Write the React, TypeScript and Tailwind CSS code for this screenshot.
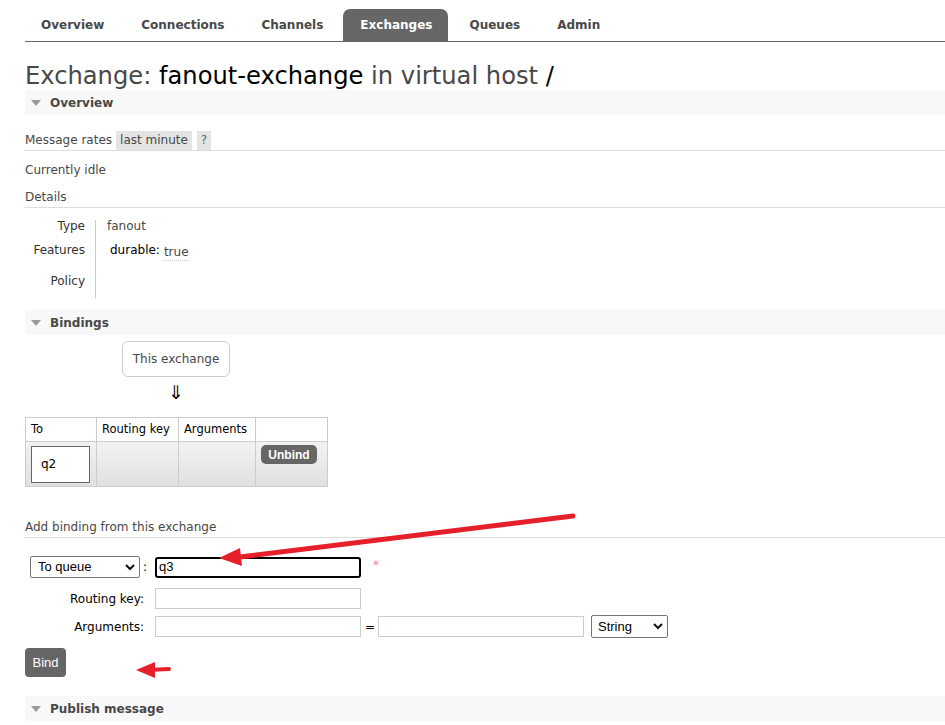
import React from "react";

const F = { fontFamily: '"DejaVu Sans", Verdana, sans-serif' };
const A = { fontFamily: '"Liberation Sans", Arial, sans-serif' };

function SectionHeader({ title, className = "" }: { title: string; className?: string }) {
  return (
    <div className={"flex h-[25px] items-center bg-[#f8f8f8] " + className}>
      <svg width="10" height="6" viewBox="0 0 10 6" className="ml-[6px] mr-[9px]">
        <polygon points="0,0 10,0 5,6" fill="#999" />
      </svg>
      <span className="text-[12px] font-bold text-[#484848]">{title}</span>
    </div>
  );
}

export default function App() {
  const tabs = ["Overview", "Connections", "Channels", "Exchanges", "Queues", "Admin"];
  return (
    <div className="relative min-h-[725px] w-[945px] overflow-hidden bg-white text-[12px] text-[#484848]" style={F}>
      <div className="pl-[25px]">
        {/* nav */}
        <div className="mt-[9px] flex h-[33px] border-b border-[#666]">
          {tabs.map((t, i) => (
            <div
              key={t}
              className={
                "flex h-[32px] items-center rounded-t-[7px] pl-[17px] pr-[16px] text-[12px] font-bold " +
                (i === 0 ? "ml-[-1px] mr-[4px] " : "mr-[4px] ") +
                (t === "Exchanges" ? "bg-[#666] text-white" : "text-[#484848]")
              }
            >
              {t}
            </div>
          ))}
        </div>

        {/* title */}
        <h1 className="mt-[22px] text-[24.2px] leading-[24px] font-normal text-[#484848]">
          Exchange: <span className="text-black">fanout-exchange</span> in virtual host <span className="text-black">/</span>
        </h1>

        <SectionHeader title="Overview" className="mt-[2px]" />

        <div className="mt-[16px] flex h-[20px] items-center border-b border-[#ddd] pb-[1px]">
          <span className="mr-[4px]">Message rates</span>
          <span className="flex h-[19px] items-center bg-[#e4e4e4] px-[4px] text-[#484848]">last minute</span>
          <span className="ml-[5px] flex h-[19px] items-center bg-[#e4e4e4] px-[4px] text-[#666]">?</span>
        </div>

        <div className="mt-[12px] leading-[14px]">Currently idle</div>

        <div className="mt-[13px] border-b border-[#ddd] pb-[3px] leading-[14px]">Details</div>

        <div className="mt-[12px] flex">
          <div className="w-[71px] border-r border-[#ccc] pr-[10px] text-right text-[#333]">
            <div className="h-[24px] leading-[13px]">Type</div>
            <div className="h-[31px] leading-[13px]">Features</div>
            <div className="h-[23px] leading-[13px]">Policy</div>
          </div>
          <div className="pl-[11px]">
            <div className="h-[24px] leading-[13px]">fanout</div>
            <div className="flex h-[31px] items-start pl-[3px] leading-[13px]">
              <span className="text-black">durable:</span>
              <span className="ml-[4px] mt-[2px] border-b border-dotted border-[#ccc] pb-[1px]">true</span>
            </div>
            <div className="h-[23px]"></div>
          </div>
        </div>

        <SectionHeader title="Bindings" className="mt-[12px]" />

        <div className="ml-[97px] mt-[6px] flex h-[36px] w-[108px] items-center justify-center rounded-[6px] border border-[#ccc]">
          This exchange
        </div>
        <div className="ml-[143px] mt-[4px] w-[14px] text-center text-[19px] leading-[22px] text-black">⇓</div>

        <table className="mt-[14px] table-fixed border-collapse text-[12px]" style={{ width: 302 }}>
          <colgroup>
            <col style={{ width: 71 }} />
            <col style={{ width: 82 }} />
            <col style={{ width: 77 }} />
            <col style={{ width: 72 }} />
          </colgroup>
          <thead>
            <tr className="h-[24px] bg-white">
              <th className="whitespace-nowrap border border-[#ccc] px-[5px] text-left text-[11.5px] font-normal text-black">To</th>
              <th className="whitespace-nowrap border border-[#ccc] px-[5px] text-left text-[11.5px] font-normal text-black">Routing key</th>
              <th className="whitespace-nowrap border border-[#ccc] px-[5px] text-left text-[11.5px] font-normal text-black">Arguments</th>
              <th className="border border-[#ccc] px-[5px]"></th>
            </tr>
          </thead>
          <tbody>
            <tr className="h-[45px] bg-gradient-to-b from-[#f2f2f2] to-[#e0e0e0]">
              <td className="border border-[#ccc] px-[5px] align-middle">
                <div className="flex h-[37px] w-[59px] items-center border border-[#666] bg-white pl-[9px] text-black">q2</div>
              </td>
              <td className="border border-[#ccc]"></td>
              <td className="border border-[#ccc]"></td>
              <td className="border border-[#ccc] px-[5px] align-top">
                <div
                  className="mt-[3px] flex h-[19px] w-[56px] items-center justify-center rounded-[5px] bg-[#666] text-[12px] font-bold text-white"
                  style={A}
                >
                  Unbind
                </div>
              </td>
            </tr>
          </tbody>
        </table>

        <div className="mt-[33px] border-b border-[#ddd] pb-[3px] leading-[14px]">Add binding from this exchange</div>

        {/* form */}
        <div className="mt-[18px] flex items-center">
          <div className="flex w-[122px] items-center justify-end">
            <div
              className="flex h-[22px] w-[110px] items-center justify-between rounded-[2px] border border-[#767676] bg-white pl-[7px] pr-[4px] text-[13px] text-black"
              style={A}
            >
              <span>To queue</span>
              <svg width="10" height="7" viewBox="0 0 10 7">
                <polyline points="1,1 5,5 9,1" fill="none" stroke="#111" strokeWidth="2" />
              </svg>
            </div>
            <span className="ml-[3px] text-black">:</span>
          </div>
          <div
            className="ml-[8px] flex h-[21px] w-[206px] items-center rounded-[3px] border-2 border-black pl-[2px] text-[13px] text-black"
            style={A}
          >
            q3
          </div>
          <span className="ml-[12px] mt-[-4px] text-[12px] text-[#f88]">*</span>
        </div>

        <div className="mt-[10px] flex items-center">
          <div className="w-[122px] pr-[3px] text-right text-black">Routing key:</div>
          <div className="ml-[8px] h-[21px] w-[206px] border border-[#ccc] bg-white"></div>
        </div>

        <div className="mt-[6px] flex items-center">
          <div className="w-[122px] pr-[3px] text-right text-black">Arguments:</div>
          <div className="ml-[8px] h-[21px] w-[206px] border border-[#ccc] bg-white"></div>
          <span className="mx-[4px] w-[9px] text-center text-black">=</span>
          <div className="h-[21px] w-[206px] border border-[#ccc] bg-white"></div>
          <div
            className="ml-[7px] flex h-[23px] w-[77px] items-center justify-between rounded-[2px] border border-[#767676] bg-white pl-[6px] pr-[4px] text-[13px] text-black"
            style={A}
          >
            <span>String</span>
            <svg width="10" height="7" viewBox="0 0 10 7">
              <polyline points="1,1 5,5 9,1" fill="none" stroke="#111" strokeWidth="2" />
            </svg>
          </div>
        </div>

        <div
          className="mt-[10px] flex h-[29px] w-[41px] items-center justify-center rounded-[4px] bg-[#666] text-[13px] text-white"
          style={A}
        >
          Bind
        </div>

        <SectionHeader title="Publish message" className="mt-[19px]" />
      </div>

      {/* annotation arrows */}
      <svg className="pointer-events-none absolute left-0 top-0" width="945" height="725">
        <line x1="573" y1="516" x2="232" y2="558" stroke="#e5202a" strokeWidth="5" strokeLinecap="round" />
        <polygon points="219,558 240,548 242,566" fill="#e5202a" />
        <line x1="169" y1="669" x2="148" y2="670" stroke="#e5202a" strokeWidth="4" strokeLinecap="round" />
        <polygon points="136,670 155,662 155,678" fill="#e5202a" />
      </svg>
    </div>
  );
}
